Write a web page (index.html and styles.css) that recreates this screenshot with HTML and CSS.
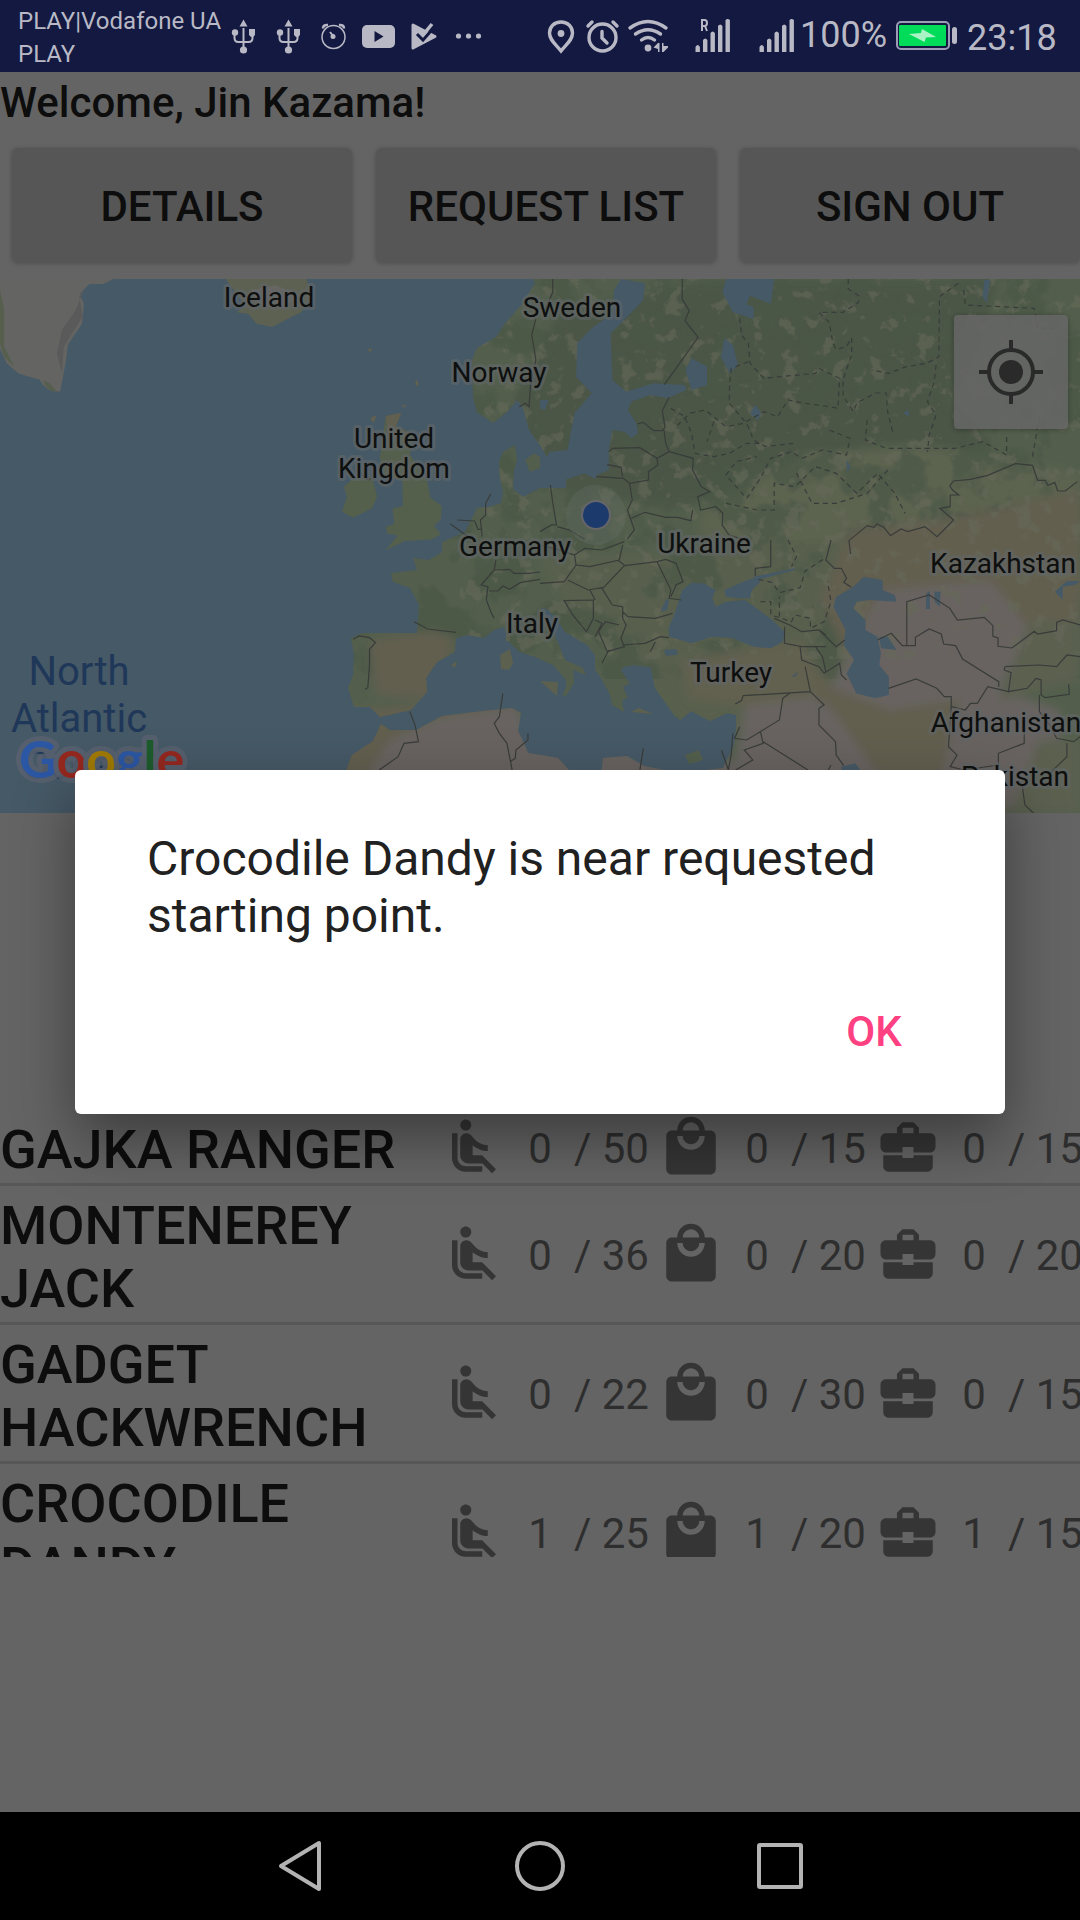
FILE: index.html
```html
<!DOCTYPE html>
<html lang="en">
<head>
<meta charset="utf-8">
<meta name="viewport" content="width=device-width, initial-scale=1">
<title>Requests</title>
<link rel="stylesheet" href="styles.css">
</head>
<body>
<svg class="sprite" aria-hidden="true">
  <symbol id="seat" viewBox="0 0 24 24"><path d="M7.59 5.41c-.78-.78-.78-2.05 0-2.83.78-.78 2.05-.78 2.83 0 .78.78.78 2.05 0 2.83-.79.79-2.05.79-2.83 0zM6 16V7H4v9c0 2.76 2.24 5 5 5h6v-2H9c-1.66 0-3-1.34-3-3zm14 4.07L14.93 15H11.5v-3.68c1.4 1.15 3.6 2.16 5.5 2.16v-2.16c-1.66.02-3.61-.87-4.67-2.04l-1.4-1.55c-.19-.21-.43-.38-.69-.5-.29-.14-.62-.23-.96-.23h-.03C8.01 7 7 8.01 7 9.25V15c0 1.66 1.34 3 3 3h5.07l3.5 3.5L20 20.07z"/></symbol>
  <symbol id="bag" viewBox="0 0 24 24"><path d="M19 6h-2c0-2.76-2.24-5-5-5S7 3.24 7 6H5c-1.1 0-1.99.9-1.99 2L3 20c0 1.1.9 2 2 2h14c1.1 0 2-.9 2-2V8c0-1.1-.9-2-2-2zm-7-3c1.66 0 3 1.34 3 3H9c0-1.66 1.34-3 3-3zm0 10c-2.76 0-5-2.24-5-5h2c0 1.66 1.34 3 3 3s3-1.34 3-3h2c0 2.76-2.24 5-5 5z"/></symbol>
  <symbol id="case" viewBox="0 0 24 24"><path d="M10 16v-1H3.01L3 19c0 1.11.89 2 2 2h14c1.11 0 2-.89 2-2v-4h-7v1h-4zm10-9h-4.01V5l-2-2h-4l-2 2v2H4c-1.1 0-2 .9-2 2v3c0 1.11.89 2 2 2h6v-2h4v2h6c1.1 0 2-.9 2-2V9c0-1.1-.9-2-2-2zm-6 0h-4V5h4v2z"/></symbol>
</svg>

<header class="status">
  <p class="carrier">PLAY|Vodafone UA<br>PLAY</p>
  <svg class="notices" viewBox="228 0 260 72" aria-hidden="true">
    <g id="usb">
      <path d="M243.500 28V50M234.500 33v5q0 4 4 4h10q4 0 4-4v-5" fill="none" stroke="#b9b9c6" stroke-width="2"/>
      <path d="M243.500 19.500l4 7h-8zM249 29h6v6l-2 2h-2l-2-2z"/><circle cx="235" cy="32.500" r="3.200"/><circle cx="243.500" cy="50" r="3.600"/>
    </g>
    <use href="#usb" x="45"/>
    <g fill="none" stroke="#b9b9c6" stroke-width="1.500"><circle cx="333.500" cy="37" r="11.500"/><path d="M323 28.500q0-4 5-3.500M344 28.500q0-4-5-3.500" stroke-width="2.500"/><path d="M330 32l3.500 4.500" stroke-width="2"/></g>
    <circle cx="333" cy="36.500" r="2.500"/>
    <rect x="362" y="25" width="33" height="23" rx="5"/><path d="M374.500 31v11l9-5.500z" fill="#131940"/>
    <path d="M413 25l22 11.500L413 48z" stroke="#b9b9c6" stroke-width="3" stroke-linejoin="round"/><path d="M417 34l6 6 14-16" fill="none" stroke="#131940" stroke-width="3"/><path d="M419 31l4 4 9-11" fill="none" stroke="#b9b9c6" stroke-width="3.500"/>
    <circle cx="458.500" cy="36" r="2.600"/><circle cx="468.500" cy="36" r="2.600"/><circle cx="478.500" cy="36" r="2.600"/>
  </svg>
  <svg class="radios" viewBox="544 0 256 72" aria-hidden="true">
    <path d="M561 22c-7 0-11.500 5-11.500 11 0 7 6 11 11.500 18 5.500-7 11.500-11 11.500-18 0-6-4.500-11-11.500-11z" fill="none" stroke="#b9b9c6" stroke-width="3.400"/><circle cx="561" cy="33.500" r="3.400"/>
    <g fill="none" stroke="#b9b9c6" stroke-width="3.400" stroke-linecap="round"><circle cx="602.500" cy="37.500" r="13.500"/><path d="M602 31.500v6.500l5 5M588 26l4-4M617 26l-4-4"/>
    <path d="M630 28q18-13 36 0M635.500 34q12.500-8.500 25 0M641.500 40q6.500-5 13 0"/></g>
    <circle cx="648" cy="48" r="3.400"/><path d="M653.500 47.500l4.500-4.500h1.500v9h-1.500v-3zM662 43h1.500v3h4.500v1.500l-4.500 4.500H662z"/>
    <path id="bars" d="M695.500 47q2.200-4 4.400 0v5h-4.400zM703 40q2.200-3 4.400 0v12H703zM710.500 33q2.200-3 4.400 0v19h-4.400zM718 26q2.200-3 4.400 0v26H718zM725.500 20q2.200-2 4.400 0v32h-4.400z"/>
    <use href="#bars" x="64"/>
    <path d="M702 31V20h2.500q2.500 0 2.500 3t-2.500 3H702m3 0l2 5" fill="none" stroke="#b9b9c6" stroke-width="2"/>
  </svg>
  <p class="level">100%</p>
  <svg class="battery" viewBox="892 0 70 72" aria-hidden="true">
    <rect x="897" y="22" width="52" height="27" rx="4" fill="none" stroke="#9d9db8" stroke-width="2"/><rect x="899" y="25" width="47" height="21" rx="1" fill="#00dc5a"/>
    <path d="M909 34l12-1 1-4 14 8-10 .500-1.500 4.500z" fill="#a9f3c5"/><rect x="952" y="27" width="5" height="17" rx="2.500"/>
  </svg>
  <time class="clock">23:18</time>
</header>

<main class="screen">
  <h1 class="welcome">Welcome, Jin Kazama!</h1>
  <nav class="actions">
    <button class="action" type="button">DETAILS</button>
    <button class="action" type="button">REQUEST LIST</button>
    <button class="action" type="button">SIGN OUT</button>
  </nav>

  <section class="map" aria-label="Map">
    <svg class="map-canvas" viewBox="0 279 1080 534" preserveAspectRatio="xMidYMid slice">
      <defs>
        <path id="mainland" d="M533 279l2 4-12 20-19 22-8 12-19 11-5 12 1 37 4 15 16 11 13-10 11-13 6 7 6 23 11 15 5 8 3 12 12-1 6 2v22l-26 0-17 9-10-8 1-18 3-11-2-15-12 7-4 10 1 16 3 15-2 10-12 4-12 1-12 24-23 10v10l-13 8-16-2 4 12-26 3 2 9 17 6 9 17-2 28-55 0-11 5 3 17-1 20-5 13 6 19h16l10 10 31-7 16-18-1-14 11-16 18-10 1-14 11-3 17 3 10-8 10-3 6 16 10 9 15 5 18 8 13 15v8l-4 7 4 1 8-13-1-13 13 5-3-7-18-8-7-17-10-23-7-12 6 1 9 9 9 14 22 13 8 10v15l6 8 9 17 2 10 12 7-2-12 6-2-5-11 7-4-9-12 2-4 10-2 18 2 4 21 7 10 12 17 6 5 11-9 19 10 17-8 9 2v13l-2 17-11 23-44 5-35-7-17-10-24 2-1 10-8 12-25-10-11-12-17-3-13-2-4-10-6-12 3-18-9-5-29 3-41 5-26 14h-26l-9-6-8 17-21 14-6 16-2 17-8 43H1080V279z"/>
        <clipPath id="land"><use href="#mainland"/></clipPath>
        <filter id="mottle" x="0" y="0" width="100%" height="100%" color-interpolation-filters="sRGB"><feTurbulence type="fractalNoise" baseFrequency=".06" numOctaves="4" seed="7"/><feColorMatrix values="0 0 0 0 .4  0 0 0 0 .41  0 0 0 0 .35  9 0 0 0 -5.200"/></filter>
        <filter id="woods" x="0" y="0" width="100%" height="100%" color-interpolation-filters="sRGB"><feTurbulence type="fractalNoise" baseFrequency=".02" numOctaves="4" seed="3"/><feColorMatrix values="0 0 0 0 .29  0 0 0 0 .34  0 0 0 0 .28  9 0 0 0 -4.600"/></filter>
        <filter id="soft"><feGaussianBlur stdDeviation="4"/></filter>
      </defs>
      <rect y="279" width="1080" height="534" fill="#465966"/>
      <use href="#mainland" fill="#535f4c"/>
      <g clip-path="url(#land)">
        <g filter="url(#soft)">
          <path d="M560 310l140-30h300l-20 60-30 60 40 40-70 60-40-50-80 10-120 50-120-20-60-60z" fill="#4b5647"/>
          <path d="M700 515l100-60 110-10 90 10 80 20v120H850l-30-40-120-20z" fill="#5c6350"/>
          <path d="M540 560l300-20 40 130-100 60H690l-60-60-60-60z" fill="#59604d"/>
        </g>
        <rect x="330" y="279" width="750" height="400" filter="url(#woods)" opacity=".7"/>
        <g filter="url(#soft)">
          <path d="M370 640l65-10 20 10-20 60-60-5z" fill="#625f4f"/>
          <path d="M850 530l90-10 100-20 40-10v170H850l-30-60z" fill="#645f4f"/>
          <path d="M680 660l120-20 40 60-60 10-90-10z" fill="#62604f"/>
          <path d="M340 710l70-5 110-15 10 20-90 12-60 50-50 30z" fill="#625f4f"/>
          <path d="M390 740l50-22 75-12 20 35 200 20 10-55 70-10 60 120H340z" fill="#676360"/>
          <path d="M880 590l110-10 40 50-30 60 60 20v100H840l-40-60 30-60z" fill="#676360"/>
          <path d="M810 680l80 30 70-10-20 80-50 10z" fill="#625f50"/>
          <path d="M1030 620h50v60l-80 20zM1040 740h40v73h-70z" fill="#5c6050"/>
        </g>
        <rect x="460" y="279" width="620" height="380" filter="url(#mottle)" opacity=".6"/>
      </g>

      <!-- islands and north Atlantic coast -->
      <g transform="translate(0 270) scale(.3444 .3333)">
        <path d="M0 27h330l-30 15-40 0-28 30 12 30-6 60-40 60-8 60-15 82q-40 5-60-35l-60-18-35-30-25-55z" fill="#646462"/>
        <path d="M0 60l12 60 0 110 30 60-30-30-12-40zM105 320l40 20 20 25q-30 0-40-35z" fill="#565f4e"/><path d="M250 45l-20 35 10 60-55 90-5 80-15-60 15-70 40-60z" fill="#5b5a5b"/>
        <path d="M655 27h235l15 50-30 50-40 20-45 24-45-10-25-30-33-4 25-20z" fill="#5c6152"/><path d="M730 60l70-15 70 30-50 40-70-10z" fill="#676562"/>
        <path d="M1065 240l16-6-5 12zM1208 328l7 12-3 10-6-8zM1165 410l8-8 6 8zM1075 445l18-10-8 25z" fill="#62604f"/>
        <path d="M1120 438l45-10-15 40 50 25-10 60 50 80 10 50 32 25-2 40-20 20 20 25-25 15-80 5-55 28 35-45-30-5-5-20 25-10-5-45 30-8-2-80-55-5-10-60z" fill="#55604c"/>
        <path d="M1120 438l45-10-15 40 30 20-50 30z" fill="#605f50"/>
        <path d="M1020 630l60-10 15 60-15 35-55 28-32-18 15-45-10-30z" fill="#55604c"/>
        <path d="M1525 570l25-20 18 10v35l-30 10z" fill="#535f4c"/>
      </g>
      <path d="M500 655l10-6 3 14-4 7-8-1zM451 665l6-4-2 7zM540 681l18 1-1 14zM631 712l8-4 14 6zM706 713l14-2-8 5zM506 635l4-2v8h-4z" fill="#5c604f"/>

      <!-- inland seas and lakes -->
      <g fill="#465966">
        <path transform="translate(540 270) scale(.3444 .3333)" d="M235 27l70 13-5 50-65 70-30 30 5 140 40 35 80-25 90 5 5 15-55 25-50-10-55 20-10 25 25 40 5 30-20 15-20-20-35-5-10 60v60l-35 15-5 13-30-18-100 35-30-10v-55l30-35 50-5 20-110 50-60-45-50 3-100 42-45 60-45 5-70zM540 27h140l-10 75-60-25-10 25 20 10v35l-60-20-30-60zM440 265l45 25v55l-45 15-18-60zM535 205l25 20 15 60-25 25-25-50zM610 430l15-25 18 25-12 20zM1290 30h17l-10 70-12-20zM1055 430l15-12 2 22zM890 570l12 20-10 18zM0 390l25 0-10 30-15-5z"/>
        <path transform="translate(540 540) scale(.3444 .3333)" d="M440 128l35 2 35 20-10 25 10 25 30-15 55-5 80 60 35 35-5 30-35 20-50-5-60-25-60-5-60 20-65-20-2-25 20-50 20-65zM535 150l55-25 40-15 10 15-25 25-5 25-35 0-35-5zM360 330l35-3 5 17-35 3zM350 215l15-35 10-5-5 35zM860 170l50-30 30-30 55 10 0 30 35 15 5 20-80-5-35 5-10 20 35 35 0 30 35 20 10 50-5 35 28 35v55l-40 10-55-15-28-60 22-40-30-45 5-45-35-70zM985 290l25 0 25 40-45-5zM1495 155l35-32h38l-15 12-35 5 0 40zM1122 160l10-8v55h-12zM1145 155l18 0-2 45-15-15zM875 680l40-10 15 20h-55zM730 410l20-15-8 15zM620 110l120-25 0 5-110 30z"/>
      </g>
      <path d="M685 755l14-5 4 10-14 4z" fill="#535f4c"/>

      <!-- borders -->
      <g class="border">
        <g transform="translate(0 270) scale(.3444 .3333)"><path d="M1556 145l-12 50 12 75-15 70-5 70-10-10-18 10M1425 672l-15 28 0 35-15 15 5 50M1328 750l50 3 10 25h12M1308 762l20 15 40 30"/><path d="M1048 610l20 20 10-5"/></g>
        <g transform="translate(540 270) scale(.3444 .3333)"><path d="M37 27v40l-25 60M413 27l0 60 20 35-12 30 38 50-98 142M375 382l-20 40 8 50-8 10-25 0-30-25-18 5M360 480l5 40 10 25-35 20-50-32-80 2-10 10M375 545l70 20-2 35 25 50 25 15-35 15 8 40 45-10 20 20-2 35 20 30 60 20M340 565l2 20-27 20v25l-55 10-18-15-78-5M240 620l-5-28-40-8M260 640l8 50-14 30 20 60-20 27M265 745l40-18 60 15 35 0 38 10 5-32M30 645l8 60 10 60-15 0-33 20M50 770l35 10 45 28M1560 635l-35 28-22 0-8-25-20 8-8-15h-22l-15-45-50-5-80 35-50 12-50 5-10 15 8 12 18 15-25 0 0 35-30 5 40 35-48 50-35-30-50 15-20-8-30 20-20-25-20-10-8 10-20-5-53 45 5 40"/></g>
        <g transform="translate(0 540) scale(.3444 .3333)"><path d="M1202 245l40 22 82 10M1025 298l18-10 30 5 17 15-17 20v45l-5 70-8 5M1190 515l15 40 10 50-42 5-17 40-55 40M1460 460l-10 70-15 20 15 30 22 30 15 80M1533 580v20l-35 30-2 25-15 10M1440 60l-5 30-38 45 20 5-5 40 15 40 8 15M1435 90l45-2 12 12h45l31-4M1420 153h25l15-15 20 10 30-20 58-10"/></g>
        <g transform="translate(540 540) scale(.3444 .3333)"><path d="M0 15l40 10 60 20 30-20 50 5 65-25M100 45l5 30 40 5 85-20 10-45M105 75l-35 50-70 5M80 120l60 30 45-8 60-65 95-12 40 85-5 25 35 5M340 65l25-7 30 12 20 55-20 10-15 35M245 75l-20-15M70 182l85-2v55l-20 40-40-50zM180 145l30 50 30 5v35l10 20-15 40 10 25-50 15-25-60 20-30 40 10M160 180l-15-30M160 240l20 10-20 40M200 330l-20 40M240 315l65-5 45-20 25 3M320 335l15-30M240 215l15 15 80 5 50-15M670 0v80l-45 5v23M680 235l45 20 35 20 50-5 20 15M710 260l0 50 50 10 70 0M810 270l50 50 25-20M755 320l5 40 50 20 15 20 45-30 5 35 15 15M800 320l20 30 10 45M770 380l15 75-195 12-5 15-18 10M725 460l-20 15-10 65-95 60-35-5 15-35M640 575l8 35-55 20 25 30-50 30M648 605l130 85M785 455l40 40-15 10v50l48 50 2 40 22 32M845 675l-8 15M845 0l-15 60 25 25 20 0 15 30-8 12 22 15M980 300l40-20 32 37h38v-25l40-25 35 15 7 30 35 5 20 40 105 68v15M1065 315V185l65-20 60 40 22 35 78-8 25 25v32l15 5v25l40 5 65-50 10 8 55-10 0-25 18-7 50 15M1012 445l80-28 60 28 22 25h20v30l-8 120 25 25-20 35 40 10 100-15v-35l75-30 0-80M1195 500l40 10 15-20 20 0 30-50 60 15 55-10 25-30 15 5v45l12 8 70-10-2-30M1350 380l100-5 50 5 30-35 38 5M1350 380l-2 10 20 8-8 60M1450 465l0 50 30 40 20 40 50 10 18-15M527 630l20 60 8-45 5-65M300 625l-10 65M1530 610l0 40-50 50M1400 735l8 60 25 25"/></g>
      </g>
      <g class="border region">
        <g transform="translate(540 270) scale(.3444 .3333)"><path d="M895 27v30l30 20 0 20-45 30-70 0 30 30 10 60 10 22 30-10 15-25v50l-25 75 0 50 30 45 10-25 55-30 30 0 5 60 15 60M1215 40l-55 40-2 180-35 20-60 10-50 20-50-10M1150 285l-5 50-20 60 25 40-20 60-5 50M580 145l5 50 20 25 5 60 40 45 150-15 10-15 60 30-5 90-25-5-70-10-50-10-30 50-40-15-60 35-50 10-60-50-45 10-40 40M605 275l-50 20-5 60 0 45 50 60 20 50 35 20 80-10M380 415l40 25 20 50 10 60 55 10 45-10 50-30 40 0M505 455l-20 60M840 480l60 25-10 50-70-15-60 25-30-20-60 20-30 60-40 60-60-70 30-40 60-15M950 450l-5 60 60 25 200 0 80-20 70 40 0-60M1010 600l-60 70-90 30-70 0-50-100M540 700l90 20 50 0 0-80 60 10 60-60 60 20 60 60 60-60 50 60 30 60M1230 60l5 45 200 10 10 60 50 0M1430 560l20-120"/></g>
        <g transform="translate(540 540) scale(.3444 .3333)"><path d="M635 118l40 10 20 30 60-15 15-50 60-40M640 185h30v40l60 20 10-20 45 10 0 30 40-20 20-60-10-60M720 0l25 50-15 30M695 230l0-60"/></g>
      </g>
      <circle cx="596" cy="515" r="30" fill="#67706a" opacity=".3"/>
      <circle class="me" cx="596" cy="515" r="14"/>

      <g class="place">
        <text x="269" y="307">Iceland</text><text x="572" y="317">Sweden</text><text x="499" y="382">Norway</text>
        <text x="394" y="448">United</text><text x="394" y="478">Kingdom</text><text x="515" y="556">Germany</text>
        <text x="704" y="553">Ukraine</text><text x="1003" y="573">Kazakhstan</text><text x="532" y="633">Italy</text>
        <text x="731" y="682">Turkey</text><text x="1006" y="732">Afghanistan</text><text x="1015" y="786">Pakistan</text>
      </g>
      <g class="ocean"><text x="79" y="685">North</text><text x="79" y="732">Atlantic</text><text x="79" y="779">Ocean</text></g>
      <text class="google" x="19" y="778"><tspan fill="#2c57a4">G</tspan><tspan fill="#95281f">o</tspan><tspan fill="#a07a05">o</tspan><tspan fill="#2c57a4">g</tspan><tspan fill="#1d5c2c">l</tspan><tspan fill="#95281f">e</tspan></text>
    </svg>
    <button class="locate" type="button" aria-label="My location">
      <svg viewBox="0 0 66 66" aria-hidden="true"><circle cx="33" cy="33" r="22" fill="none" stroke="#2a2a2a" stroke-width="4"/><circle cx="33" cy="33" r="12" fill="#2a2a2a"/><path d="M33 1v10M33 55v10M1 33h10M55 33h10" stroke="#2a2a2a" stroke-width="4"/></svg>
    </button>
  </section>

  <ul class="rangers">
    <li class="ranger"><h2 class="name">GAJKA RANGER</h2>
      <p class="stat"><svg class="icon"><use href="#seat"/></svg><span class="count">0</span><span class="total">/ 50</span></p>
      <p class="stat"><svg class="icon"><use href="#bag"/></svg><span class="count">0</span><span class="total">/ 15</span></p>
      <p class="stat"><svg class="icon"><use href="#case"/></svg><span class="count">0</span><span class="total">/ 15</span></p></li>
    <li class="ranger"><h2 class="name">MONTENEREY JACK</h2>
      <p class="stat"><svg class="icon"><use href="#seat"/></svg><span class="count">0</span><span class="total">/ 36</span></p>
      <p class="stat"><svg class="icon"><use href="#bag"/></svg><span class="count">0</span><span class="total">/ 20</span></p>
      <p class="stat"><svg class="icon"><use href="#case"/></svg><span class="count">0</span><span class="total">/ 20</span></p></li>
    <li class="ranger"><h2 class="name">GADGET HACKWRENCH</h2>
      <p class="stat"><svg class="icon"><use href="#seat"/></svg><span class="count">0</span><span class="total">/ 22</span></p>
      <p class="stat"><svg class="icon"><use href="#bag"/></svg><span class="count">0</span><span class="total">/ 30</span></p>
      <p class="stat"><svg class="icon"><use href="#case"/></svg><span class="count">0</span><span class="total">/ 15</span></p></li>
    <li class="ranger"><h2 class="name">CROCODILE DANDY</h2>
      <p class="stat"><svg class="icon"><use href="#seat"/></svg><span class="count">1</span><span class="total">/ 25</span></p>
      <p class="stat"><svg class="icon"><use href="#bag"/></svg><span class="count">1</span><span class="total">/ 20</span></p>
      <p class="stat"><svg class="icon"><use href="#case"/></svg><span class="count">1</span><span class="total">/ 15</span></p></li>
  </ul>

  <div class="overlay">
    <div class="dialog" role="alertdialog" aria-modal="true" aria-labelledby="message">
      <p class="message" id="message">Crocodile Dandy is near requested starting point.</p>
      <button class="ok" type="button">OK</button>
    </div>
  </div>
</main>

<footer class="keys">
  <button class="key" type="button" aria-label="Back"><svg viewBox="0 0 54 54"><path d="M46 4v46L8 27z"/></svg></button>
  <button class="key" type="button" aria-label="Home"><svg viewBox="0 0 54 54"><circle cx="27" cy="27" r="23"/></svg></button>
  <button class="key" type="button" aria-label="Recent apps"><svg viewBox="0 0 54 54"><rect x="6" y="6" width="42" height="42" rx="1"/></svg></button>
</footer>
</body>
</html>
```

FILE: styles.css
```css
* { box-sizing: border-box; }

body {
  margin: 0;
  min-height: 100vh;
  display: flex;
  flex-direction: column;
  background: #646464;
  color: #0d0d0d;
  font-family: Roboto, "Liberation Sans", sans-serif;
}

h1, h2, p, ul { margin: 0; padding: 0; }
button { border: 0; padding: 0; font: inherit; color: inherit; }
svg { display: block; }
.sprite { position: absolute; width: 0; height: 0; }

/* Status bar */
.status {
  display: flex;
  align-items: center;
  height: 72px;
  padding: 0 24px 0 18px;
  background: #131940;
  color: #b9b9c6;
  fill: #b9b9c6;
}
.carrier { width: 210px; padding-top: 3px; font-size: 24px; line-height: 33px; white-space: nowrap; }
.notices { width: 260px; height: 72px; }
.radios { width: 256px; height: 72px; margin-left: auto; }
.level, .clock { font-size: 36px; line-height: 42px; }
.level { width: 92px; padding-bottom: 3px; }
.battery { width: 70px; height: 72px; }
.clock { width: 94px; padding: 3px 0 0 5px; }

/* Page */
.screen {
  position: relative;
  flex: 1;
  display: flex;
  flex-direction: column;
  overflow: hidden;
}
.welcome { padding: 6px 0 2px; font-size: 42px; line-height: 50px; font-weight: 500; }
.actions { display: flex; gap: 24px; padding: 18px 0 17px 12px; }
.action {
  flex: 1;
  height: 114px;
  padding-top: 2px;
  border-radius: 6px;
  background: #565656;
  box-shadow: 0 1px 5px rgba(0, 0, 0, .25);
  font-size: 42px;
  font-weight: 500;
}

/* Map */
.map { position: relative; height: 534px; overflow: hidden; }
.map-canvas { width: 100%; height: 100%; }
.border path { fill: none; stroke: #393c3a; stroke-width: 1.2; vector-effect: non-scaling-stroke; }
.region path { stroke-dasharray: 5 4; }
.me { fill: #1c3a6b; stroke: #66666a; stroke-width: 2; }
.place text {
  font-size: 28px;
  text-anchor: middle;
  fill: #0e0f0f;
  stroke: rgba(98, 102, 104, .6);
  stroke-width: 6;
  stroke-linejoin: round;
  paint-order: stroke;
}
.ocean text { font-size: 40px; text-anchor: middle; fill: #1f3758; }
.google {
  font-family: Lato, sans-serif;
  font-size: 52px;
  font-weight: 700;
  stroke: rgba(88, 96, 110, .85);
  stroke-width: 10;
  stroke-linejoin: round;
  paint-order: stroke;
}
.locate {
  position: absolute;
  top: 36px;
  right: 12px;
  display: grid;
  place-items: center;
  width: 114px;
  height: 114px;
  border-radius: 4px;
  background: rgba(102, 102, 102, .85);
  box-shadow: 0 1px 5px rgba(0, 0, 0, .3);
}
.locate svg { width: 66px; height: 66px; }

/* Rangers */
.rangers { height: 447px; margin-top: 297px; overflow: hidden; list-style: none; }
.ranger { display: flex; align-items: center; border-bottom: 3px solid #575757; }
.name {
  flex: 1 0 441px;
  padding: 8px 24px 2px 0;
  font-size: 54px;
  line-height: 63px;
  font-weight: 500;
}
.stat {
  flex: none;
  display: flex;
  align-items: center;
  width: 217px;
  height: 66px;
  color: #2e2e2e;
  font-size: 42px;
  line-height: 48px;
  white-space: nowrap;
}
.icon { width: 66px; height: 66px; fill: #353535; }
.count { width: 66px; padding-top: 4px; text-align: center; }
.total { padding: 4px 0 0 1px; }

/* Dialog */
.overlay {
  position: absolute;
  inset: 0;
  display: grid;
  align-items: center;
  padding: 0 75px;
}
.dialog {
  display: flex;
  flex-direction: column;
  gap: 33px;
  padding: 60px 35px 29px 72px;
  border-radius: 6px;
  background: #fff;
  box-shadow: 0 24px 60px rgba(0, 0, 0, .4);
}
.message { padding-right: 37px; color: #212121; font-size: 48px; line-height: 57px; }
.ok {
  align-self: flex-end;
  width: 192px;
  height: 108px;
  background: none;
  color: #ff4081;
  font-size: 42px;
  font-weight: 500;
}

/* Navigation keys */
.keys { display: flex; justify-content: center; gap: 186px; height: 108px; background: #000; }
.key { display: grid; place-items: center; width: 54px; background: none; }
.key svg { width: 54px; height: 54px; fill: none; stroke: #b3b3b3; stroke-width: 4; stroke-linejoin: round; }
```
